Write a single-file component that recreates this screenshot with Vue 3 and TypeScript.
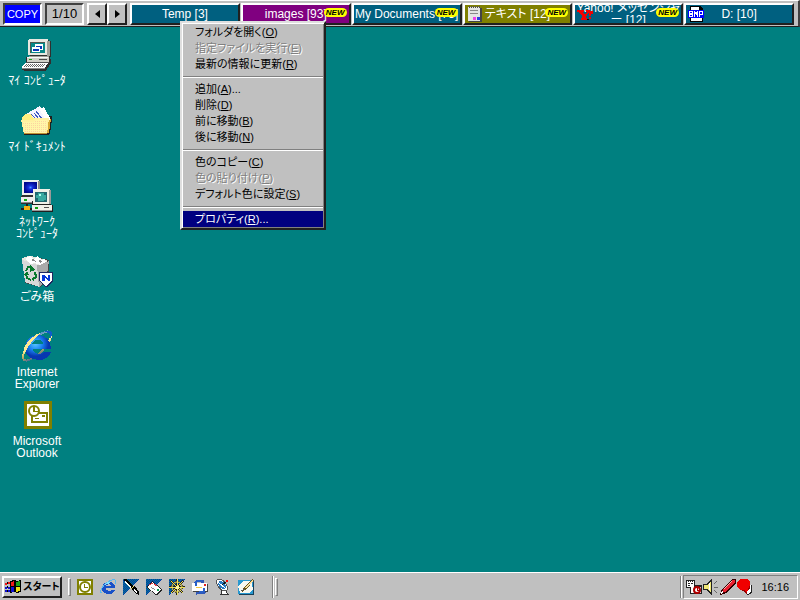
<script setup lang="ts">
import { ref } from 'vue'

interface Tab {
  label: string
  tone: 'blue' | 'purple' | 'olive'
  isNew: boolean
  icon?: string
}
interface MenuItem {
  label: string
  key: string
  tail?: string
  disabled?: boolean
  active?: boolean
}
interface Shortcut {
  icon: string
  lines: string[]
}

const tabs: Tab[] = [
  { label: 'Temp [3]', tone: 'blue', isNew: false },
  { label: 'images [93]', tone: 'purple', isNew: true },
  { label: 'My Documents [73]', tone: 'blue', isNew: true },
  { label: 'テキスト [12]', tone: 'olive', isNew: true, icon: 'note' },
  { label: 'Yahoo! メッセンジャ\nー [12]', tone: 'blue', isNew: true, icon: 'yahoo' },
  { label: 'D: [10]', tone: 'blue', isNew: false, icon: 'bmp' },
]

const groups: MenuItem[][] = [
  [
    { label: 'フォルダを開く', key: 'O' },
    { label: '指定ファイルを実行', key: 'E', disabled: true },
    { label: '最新の情報に更新', key: 'R' },
  ],
  [
    { label: '追加', key: 'A', tail: '...' },
    { label: '削除', key: 'D' },
    { label: '前に移動', key: 'B' },
    { label: '後に移動', key: 'N' },
  ],
  [
    { label: '色のコピー', key: 'C' },
    { label: '色の貼り付け', key: 'P', disabled: true },
    { label: 'デフォルト色に設定', key: 'S' },
  ],
  [{ label: 'プロパティ', key: 'R', tail: '...', active: true }],
]

const shortcuts: Shortcut[] = [
  { icon: 'computer', lines: ['ﾏｲ ｺﾝﾋﾟｭｰﾀ'] },
  { icon: 'documents', lines: ['ﾏｲ ﾄﾞｷｭﾒﾝﾄ'] },
  { icon: 'network', lines: ['ﾈｯﾄﾜｰｸ', 'ｺﾝﾋﾟｭｰﾀ'] },
  { icon: 'trash', lines: ['ごみ箱'] },
  { icon: 'explorer', lines: ['Internet', 'Explorer'] },
  { icon: 'outlook', lines: ['Microsoft', 'Outlook'] },
]

const quick = [
  { icon: 'q-outlook', name: 'Outlook' },
  { icon: 'q-ie', name: 'Internet Explorer' },
  { icon: 'q-pen', name: 'Composer' },
  { icon: 'q-mail', name: 'Mail' },
  { icon: 'q-helm', name: 'Navigator' },
  { icon: 'q-express', name: 'Outlook Express' },
  { icon: 'q-dish', name: 'Channels' },
  { icon: 'q-desk', name: 'Desktop' },
]

const tray = ['t-task', 't-sound', 't-pen', 't-ime']
const page = ref(1)
</script>

<template>
  <svg class="sprite" aria-hidden="true">
    <defs>
      <pattern id="dither" width="2" height="2" patternUnits="userSpaceOnUse">
        <path fill="#0038a8" d="M0 0h2v2H0z" /><path fill="#087890" d="M0 0h1v1H0zM1 1h1v1H1z" />
      </pattern>
      <pattern id="sand" width="2" height="2" patternUnits="userSpaceOnUse">
        <path fill="#fff6a8" d="M0 0h2v2H0z" /><path fill="#fcd4a0" d="M0 0h1v1H0z" />
      </pattern>
      <radialGradient id="globe" cx="40%" cy="35%"><stop offset="0" stop-color="#58c8ff" /><stop offset=".55" stop-color="#1880f0" /><stop offset="1" stop-color="#0838b0" /></radialGradient>
      <radialGradient id="scrBlue"><stop offset="0" stop-color="#4898ff" /><stop offset=".3" stop-color="#1830e0" /><stop offset="1" stop-color="#000890" /></radialGradient>
      <linearGradient id="ring" x1="0" y1="1" x2="1" y2="0"><stop offset="0" stop-color="#0848b8" /><stop offset=".3" stop-color="#b0a060" /><stop offset=".55" stop-color="#fff090" /><stop offset="1" stop-color="#1870d8" /></linearGradient>
    </defs>

    <symbol id="computer" viewBox="0 0 32 32">
      <path fill="#303030" d="M9 1h19v1h2v16h-1v2h1v5h-1l-4 7H3v-1h-2v-3l4-4v-6h4z" />
      <path fill="#e8e8e0" d="M7 1l1-1h18l1 1v15H7z" />
      <path fill="#a0a098" d="M26 2h3v14l-2 2H8v-1h18z" />
      <path fill="#505850" d="M9 3h15v11H9z" /><path fill="#088888" d="M10 4h14v10H10z" />
      <path fill="#fff" d="M14 5h8v6h-3v2h-8V8h3z" /><path fill="#0838b8" d="M15 7h6v3h-2V8h-4zM12 10h6v2h-6z" />
      <path fill="#d0d0c8" d="M6 18h22v5H6z" /><path fill="#f8f8f8" d="M6 18h21v1H6z" />
      <path fill="#18a018" d="M8 20h3v1H8z" /><path fill="#484848" d="M18 20h8v1h-8z" />
      <path fill="#505050" d="M5 23h23v1H5z" />
      <path fill="#fff" d="M4 24h23l-3 5H1v-1z" />
      <path stroke="#686868" stroke-dasharray="1 1" d="M5 25.500h20M4 26.500h20M3 27.500h20" />
      <path fill="#888" d="M1 29h23v1H1z" />
    </symbol>
    <symbol id="documents" viewBox="0 0 32 32">
      <path fill="#202020" d="M2 11h29v4l-2 13-2 2H3z" />
      <path fill="#f4f4ff" d="M5 9L19 1l8 12H8z" /><path fill="#fff" d="M18 4l5-2 7 13-3 3z" />
      <path stroke="#4058c0" d="M10 9l5 5M13 8l5 6M15 6l6 8" fill="none" />
      <path fill="#fff080" d="M1 12l3-3h6l2 4h15v4H1z" /><path fill="#d8a838" d="M27 15l3-1-2 14h-2z" />
      <path fill="#fff0a0" d="M0 15h11l3-2h14l-2 16H3z" /><path fill="url(#sand)" d="M2 17h10l3-2h11l-1 13H4z" />
      <path fill="#c09030" d="M3 28h23v1H3z" />
    </symbol>
    <symbol id="network" viewBox="0 0 32 32">
      <path fill="#303030" d="M1 1h18v15h2v8H0v-8h1z" /><path fill="#eee" d="M1 0h17v15H1zM0 17h19v6H0z" />
      <path fill="#888" d="M17 1h2v14h-2zM0 22h19v1H0z" /><path fill="url(#scrBlue)" d="M3 2h13v11H3z" />
      <path fill="#10b010" d="M3 19h3v2H3z" />
      <path fill="#202020" d="M12 11h18v14h2v7H11z" /><path fill="#f0f0e8" d="M12 9h17v15H12zM11 25h20v6H11z" />
      <path fill="#999" d="M28 10h2v14h-2zM11 30h20v1H11z" /><path fill="#206870" d="M14 12h12v10H14z" />
      <path fill="#38a8a0" d="M17 13h6v2h2v5h-2v1h-6v-3h-2v-3h2z" /><path fill="#b0fff0" d="M18 14h2v2h-2z" />
      <path fill="#10a010" d="M14 27h3v2h-3z" /><path fill="#505050" d="M23 27h5v1h-5z" />
      <path fill="#202020" d="M0 28h11v2H0zM5 24h2v4H5z" /><path fill="#f8b010" d="M3 26h6v4H3z" />
    </symbol>
    <symbol id="trash" viewBox="0 0 32 32">
      <path fill="#444" d="M2 6l8-5 18 4v20l-9 7-15-4z" /><path fill="#e8e8e0" d="M0 4l7-3 9 1 11 4-6 5-9 1z" />
      <path fill="#d8d8d8" d="M1 5l15 5 2 22-14-5z" /><path fill="#aaa" d="M16 10l12-4-3 20-7 6z" />
      <path fill="#fff" d="M4 4l5-3 4 3 4-3 3 4 4-1 1 3-6 3-5-2-4 1z" /><path fill="#888" d="M9 5l4-1 2 3zM18 5l3 1-2 3z" />
      <path fill="none" stroke="#08782c" stroke-width="2" d="M5 16l2-4 4 1M14 17l1 5-3 2M10 25l-4-2-1-4" />
      <path fill="#08782c" d="M9 10l5 5-5 2zM13 21v6l-3-3zM2 20l4-4 2 4z" />
      <path fill="#202860" d="M18 17h14v9l-7 7-7-7z" /><path fill="#fff" d="M19 18h12v8l-6 5-6-5z" />
      <path fill="#0838d8" d="M21 20h3l3 4v-4h2v6h-2l-3-4v4h-3z" />
    </symbol>
    <symbol id="explorer" viewBox="0 0 32 32">
      <ellipse cx="16" cy="16" rx="19" ry="7" transform="rotate(-46 16 16)" fill="none" stroke="url(#ring)" stroke-width="2" />
      <path fill="url(#globe)" d="M30 19H12c0 3 3 5 6 5 2 0 4-1 5-2h7c-2 5-6 8-12 8C9 30 4 25 4 18S9 5 17 5s13 6 13 14zM22 14c0-3-2-4-5-4s-5 1-6 4z" />
      <path fill="#ffe890" d="M3 18C6 11 14 4 21 2 14 8 8 14 3 24z" />
      <path fill="#105cc8" d="M23 2c8-4 10 0 6 7 1-5-1-7-6-7z" />
    </symbol>
    <symbol id="outlook" viewBox="0 0 32 32">
      <path fill="#808000" d="M3 2h28v28H3z" /><path fill="#fff" d="M6 5h22v22H6z" />
      <path fill="#808000" d="M10 13h17v11H10z" /><path fill="#fff" d="M12 15h13v7H12z" /><path fill="#808000" d="M14 19h4v1h-4zM21 16h3v2h-3z" />
      <circle class="smooth" cx="13" cy="12" r="5" fill="#fff" stroke="#808000" stroke-width="2" /><path fill="#808000" d="M12 8h2v4h3v1h-5z" />
    </symbol>

    <symbol id="note" viewBox="0 0 16 16">
      <path fill="#444" d="M2 2h13v14H2z" /><path fill="#e4e4e4" d="M1 1h12v14H1z" /><path stroke="#555" stroke-dasharray="1 1" stroke-width="2" d="M2 1h11" />
      <path fill="#888" d="M3 4h8v1H3zM3 7h8v1H3z" /><path fill="#f040e8" d="M6 11h3v3H6z" /><path fill="#3040e0" d="M10 11h3v3h-3z" />
    </symbol>
    <symbol id="yahoo" viewBox="0 0 16 16">
      <path fill="#200000" d="M2 5l9 8H8zM6 13h6v1H6z" /><path fill="#f00000" d="M0 4h7v2H6l2 3 2-3H9V4h4v2h-1l-3 5v1h1v2H4v-2h1v-2L2 6H0zM13 5h3v3h-2v2h-2V7zM12 11h2v2h-2z" />
    </symbol>
    <symbol id="bmp" viewBox="0 0 16 16">
      <path fill="#000" d="M2 0h10l3 3v13H2z" /><path fill="#fff" d="M3 1h8v3h3v11H3z" /><path fill="#0000ff" d="M0 4h16v8H0z" />
      <path fill="#fff" d="M1 5h3l1 1v1l-1 1 1 1v1l-1 1H1zM2 6v1h2V6zM2 9v1h2V9zM6 5h1l1 2 1-2h1v6H9V8L8 9 7 8v3H6zM11 5h3l1 1v2l-1 1h-2v2h-1zM12 6v2h2V6z" />
    </symbol>

    <symbol id="flag" viewBox="0 0 18 16">
      <path fill="#000" d="M6 2l4-1 3 1 4-1v12l-4 1-3-1-4 1z" /><path fill="#f01818" d="M7 3l3-1v5H7zM1 4h2v2H1zM4 3h2v2H4z" />
      <path fill="#18a018" d="M12 3l4-1v5h-4z" /><path fill="#1010d0" d="M7 8h3v5H7zM1 8h2v2H1zM4 8h2v2H4zM1 11h2v2H1zM4 11h2v2H4z" />
      <path fill="#f0e010" d="M12 8h4v4l-4 1z" /><path fill="#000" d="M3 3h1v2H3zM3 7h1v2H3zM3 11h1v2H3z" />
    </symbol>
    <symbol id="q-outlook" viewBox="0 0 16 16">
      <path fill="#808000" d="M0 0h16v16H0z" /><path fill="#fff" d="M2 2h12v12H2z" /><circle class="smooth" cx="8" cy="8" r="5" fill="#fff" stroke="#808000" stroke-width="2" />
      <path fill="#808000" d="M7 5h1v3h3v1H7z" />
    </symbol>
    <symbol id="q-ie" viewBox="0 0 16 16">
      <path fill="#1850c8" d="M15 9H6c0 2 1 3 3 3 1 0 2 0 3-1h3c-1 3-3 4-6 4-4 0-7-2-7-6s3-6 7-6 6 2 6 6zM11 7c0-1-1-2-2-2S6 6 6 7z" />
      <path fill="none" stroke="#58b8f0" d="M2 14C-2 14 3 4 12 1c4-1 4 1 3 4" /><path fill="#80e0ff" d="M4 6l4-3 3 1-4 1z" />
    </symbol>
    <symbol id="q-pen" viewBox="0 0 16 16">
      <path fill="url(#dither)" d="M0 0h16L0 16z" /><path fill="#000" d="M1 0h2l8 7 2 1 3 5v3l-5-3-2-3-7-7z" /><path fill="#fff" d="M2 2l6 6-1 1-5-6zM11 10l3 3-1 1-2-2z" /><path stroke="#e8d860" d="M8 10l3-3" />
    </symbol>
    <symbol id="q-mail" viewBox="0 0 16 16">
      <path fill="url(#dither)" d="M0 0h16L0 16z" /><path fill="#222" d="M6 2l10 8v1l-5 5h-1L0 8z" /><path fill="#fff" d="M6 3l9 7-5 5L1 8z" />
      <path stroke="#e04040" d="M3 6l4-2M8 5l3 2" /><path stroke="#888" stroke-dasharray="1 1" d="M5 8l4 3" /><path fill="#10a050" d="M11 10h2v2h-2z" />
    </symbol>
    <symbol id="q-helm" viewBox="0 0 16 16">
      <path fill="url(#dither)" d="M0 0h16L0 16z" /><circle cx="8" cy="8" r="5" fill="none" stroke="#222" stroke-width="2" />
      <path fill="none" stroke="#222" stroke-width="2" d="M8 0v16M0 8h16M2 2l12 12M14 2L2 14" />
      <g class="smooth"><circle cx="8" cy="8" r="5" fill="none" stroke="#f0e058" /><path fill="none" stroke="#f0e058" d="M8.500 0v16M0 8.500h16M2 2l12 12M14 2L2 14" /></g><path fill="#fff8a0" d="M7 7h3v3H7z" />
    </symbol>
    <symbol id="q-express" viewBox="0 0 16 16">
      <path fill="#3058b8" d="M4 1h7l1-1v5H8l1-2H5L3 5H1zM12 15H5l-1 1v-5h4l-1 2h5l2-2h2z" /><path fill="#444" d="M1 5h15v8H1z" /><path fill="#fff" d="M0 4h15v8H0z" />
      <path fill="#e02020" d="M12 5h2v2h-2z" /><path fill="#f8c840" d="M4 8h6v1H4z" /><path fill="none" stroke="#2860c8" stroke-width="2" d="M4 7V3l2-1h4M12 9v3l-2 1H7" />
    </symbol>
    <symbol id="q-dish" viewBox="0 0 16 16">
      <path fill="#fff" stroke="#333" d="M7 10h4v3l2 2H6z" /><ellipse cx="7" cy="6" rx="4" ry="7" transform="rotate(-42 7 6)" fill="#fff" stroke="#555" />
      <ellipse cx="7" cy="6" rx="3" ry="5" transform="rotate(-42 7 6)" fill="#2878c0" /><path fill="none" stroke="#fff" d="M3 3l8 7" /><path stroke="#111" d="M7 6l5-4" /><path fill="#f00" d="M11 1h2v2h-2z" />
    </symbol>
    <symbol id="q-desk" viewBox="0 0 16 16">
      <path fill="#184058" d="M1 1h15v15H1z" /><path fill="#2898d0" d="M0 1h15v14H0z" /><path fill="#f8f8f0" d="M5 2h8l2 8-4 4H2L0 7z" />
      <path fill="#6b5418" d="M14 0l2 1-7 9-5 3 2-5z" /><path fill="#f8e0a0" d="M14 1L7 8l1 2 7-8z" /><path stroke="#555" d="M3 12l4-2" />
    </symbol>
    <symbol id="t-task" viewBox="0 0 16 16">
      <path fill="#222" d="M0 1h9v8H0zM4 6h12v9H4z" /><path fill="#fff" d="M1 3h7v5H1zM5 8h10v6H5z" /><path stroke="#fff" stroke-dasharray="1 1" d="M1 2.500h7" />
      <path fill="#222" d="M2 4h2v1H2zM5 4h2v1H5zM2 6h2v1H2z" /><circle class="smooth" cx="11" cy="11" r="3" fill="#fff" stroke="#b00000" stroke-width="2" /><path fill="#b00000" d="M11 9h1v2h1v1h-2z" />
    </symbol>
    <symbol id="t-sound" viewBox="0 0 16 16">
      <path fill="#222" d="M0 5h3l5-5h1v16H8l-5-5H0z" /><path fill="#f0e878" d="M1 6h3l4-4v12l-4-4H1z" /><path fill="#fff" d="M6 4h1v7H6z" /><path stroke="#666" d="M11 5l3-3M11 8.500h4M11 11l3 3" />
    </symbol>
    <symbol id="t-pen" viewBox="0 0 16 16">
      <path fill="#300" d="M12 0h4v4L6 14l-6 2 2-6z" /><path fill="#e82030" d="M12 1h3v2L5 13H3v-3z" /><path stroke="#ffb0b0" d="M4 10l8-8" /><path fill="#fff" d="M2 12l2 1-3 2z" />
    </symbol>
    <symbol id="t-ime" viewBox="0 0 16 16">
      <path fill="#222" d="M13 6h2v8l-4 2-4-3z" /><path fill="#fff" d="M13 6h1v7l-3 2-3-2 4-2z" />
      <path fill="#f00000" d="M3 0h7l3 3v5l-2 3-1 3-3-3H3L0 7V3z" /><path fill="#900" d="M3 11h4l3 3v1l-4-3zM12 7l1-1v3l-2 2z" />
    </symbol>
  </svg>

  <div class="screen">
    <header class="bar">
      <button class="mode copy" type="button">COPY</button>
      <output class="mode page">{{ page }}/10</output>
      <div class="arrows">
        <button class="arrow" type="button" aria-label="前へ" @click="page = Math.max(1, page - 1)"><svg width="5" height="8" viewBox="0 0 5 8"><path d="M5 0v8L0 4z" /></svg></button>
        <button class="arrow" type="button" aria-label="次へ" @click="page = Math.min(10, page + 1)"><svg width="5" height="8" viewBox="0 0 5 8"><path d="M0 0v8l5-4z" /></svg></button>
      </div>
      <nav class="tabs">
        <button v-for="tab in tabs" :key="tab.label" class="tab" :class="tab.tone" type="button">
          <svg v-if="tab.icon" class="tab-icon" width="16" height="16"><use :href="'#' + tab.icon" /></svg>
          <span class="tab-label">{{ tab.label }}</span>
          <span v-if="tab.isNew" class="new">NEW</span>
        </button>
      </nav>
    </header>

    <main class="desktop">
      <a v-for="item in shortcuts" :key="item.icon" class="shortcut" href="#">
        <svg width="32" height="32"><use :href="'#' + item.icon" /></svg>
        <span class="caption"><span v-for="line in item.lines" :key="line">{{ line }}</span></span>
      </a>
    </main>

    <div class="menu" role="menu">
      <div v-for="(group, i) in groups" :key="i" class="group">
        <button v-for="item in group" :key="item.label" class="item" :class="{ active: item.active }" :disabled="item.disabled" type="button" role="menuitem">{{ item.label }}(<u>{{ item.key }}</u>){{ item.tail }}</button>
      </div>
    </div>

    <footer class="taskbar">
      <button class="start" type="button"><svg class="flag" width="18" height="16"><use href="#flag" /></svg>スタート</button>
      <span class="grip"></span>
      <div class="quick">
        <button v-for="q in quick" :key="q.icon" class="launch" type="button" :aria-label="q.name"><svg width="16" height="16"><use :href="'#' + q.icon" /></svg></button>
      </div>
      <span class="divider"></span>
      <span class="grip"></span>
      <div class="space"></div>
      <span class="divider"></span>
      <div class="tray">
        <svg v-for="t in tray" :key="t" width="16" height="16"><use :href="'#' + t" /></svg>
        <time class="clock">16:16</time>
      </div>
    </footer>
  </div>
</template>

<style>
body {
  background: #008080;
}
</style>

<style scoped>
.screen {
  display: flex;
  flex-direction: column;
  min-height: 100vh;
  position: relative;
  font: 12px/12px "Liberation Sans", "Noto Sans CJK JP", sans-serif;
  font-feature-settings: "palt";
  color: #000;
  background: #008080;
}
.sprite {
  position: absolute;
  width: 0;
  height: 0;
}
symbol {
  shape-rendering: crispEdges;
}
.smooth {
  shape-rendering: auto;
}
button {
  box-sizing: border-box;
  margin: 0;
  padding: 0;
  border: 0;
  border-radius: 0;
  background: #c0c0c0;
  color: inherit;
  font: inherit;
  font-feature-settings: inherit;
}
.bar {
  display: flex;
  gap: 3px;
  box-sizing: border-box;
  height: 27px;
  padding: 2px 4px 1px 3px;
  background: #c0c0c0;
  border-top: 1px solid #fff;
  border-right: 2px solid #404040;
  border-bottom: 1px solid #202020;
}
.mode {
  display: flex;
  align-items: center;
  justify-content: center;
  box-sizing: border-box;
  width: 39px;
  height: 22px;
  border: 2px solid;
  border-color: #404040 #fff #fff #404040;
}
.copy {
  background: #0000ff;
  color: #fff;
  font-size: 11px;
}
.page {
  font-size: 13px;
}
.arrows {
  display: flex;
}
.arrow {
  display: flex;
  align-items: center;
  justify-content: center;
  width: 20px;
  height: 22px;
  border: 2px solid;
  border-color: #fff #202020 #202020 #fff;
}
.tabs {
  display: grid;
  grid-template-columns: repeat(6, 1fr);
  gap: 1px;
  flex: 1;
  min-width: 0;
}
.tab {
  position: relative;
  display: flex;
  align-items: center;
  justify-content: center;
  height: 22px;
  overflow: hidden;
  border: 2px solid;
  border-color: #fff #202020 #202020 #fff;
  color: #fff;
}
.blue {
  background: #006080;
}
.purple {
  background: #800080;
}
.olive {
  background: #808000;
}
.tab-label {
  white-space: pre;
  text-align: center;
}
.tab-icon {
  position: absolute;
  left: 2px;
  top: 1px;
}
.new {
  position: absolute;
  right: 2px;
  top: 3px;
  width: 23px;
  border-radius: 5px;
  background: #ffff00;
  color: #000;
  font: italic bold 8px/9px "Liberation Sans", sans-serif;
  text-align: center;
}
.desktop {
  flex: 1;
  display: grid;
  grid-template-columns: 70px;
  grid-template-rows: 66px 75px 75px 75px 69px 60px;
  padding: 12px 2px;
}
.shortcut {
  display: flex;
  flex-direction: column;
  align-items: center;
  gap: 4px;
  color: #fff;
  text-decoration: none;
}
.caption {
  display: flex;
  flex-direction: column;
  align-items: center;
  white-space: nowrap;
}
.menu {
  position: absolute;
  left: 180px;
  top: 21px;
  width: 146px;
  box-sizing: border-box;
  padding: 1px;
  background: #c0c0c0;
  border: 2px solid;
  border-color: #dfdfdf #202020 #202020 #dfdfdf;
  box-shadow: inset 1px 1px #fff, inset -1px -1px #808080;
}
.group + .group {
  margin-top: 4px;
  padding-top: 3px;
  border-top: 1px solid #808080;
  box-shadow: inset 0 1px #fff;
}
.group + .group::before {
  content: "";
  display: block;
  height: 1px;
}
.item {
  display: block;
  width: 100%;
  height: 16px;
  padding: 0 12px;
  text-align: left;
  font-size: 11px;
  line-height: 15px;
  white-space: nowrap;
}
.item:disabled {
  color: #808080;
  text-shadow: 1px 1px #fff;
}
.active {
  background: #000080;
  color: #fff;
}
.taskbar {
  display: flex;
  align-items: center;
  box-sizing: border-box;
  height: 28px;
  padding: 2px;
  background: #c0c0c0;
  border-top: 1px solid #fff;
}
.start {
  display: flex;
  align-items: center;
  justify-content: center;
  gap: 1px;
  width: 60px;
  height: 22px;
  border: 2px solid;
  border-color: #fff #202020 #202020 #fff;
  font-weight: bold;
  font-size: 10px;
  white-space: nowrap;
}
.flag {
  flex: none;
}
.grip {
  box-sizing: border-box;
  width: 3px;
  height: 18px;
  margin: 0 6px;
  border: 1px solid;
  border-color: #fff #808080 #808080 #fff;
}
.quick {
  display: flex;
  gap: 7px;
}
.launch {
  display: flex;
  width: 16px;
  height: 16px;
}
.divider {
  width: 1px;
  height: 22px;
  margin-left: 18px;
  background: #808080;
  box-shadow: 1px 0 #fff;
}
.divider + .grip {
  margin-left: 2px;
}
.space {
  flex: 1;
}
.tray {
  display: flex;
  align-items: center;
  gap: 1px;
  box-sizing: border-box;
  height: 24px;
  margin-left: 2px;
  padding: 0 8px 0 2px;
  border: 1px solid;
  border-color: #808080 #fff #fff #808080;
}
.clock {
  margin-left: 7px;
  font-size: 11px;
}
</style>
